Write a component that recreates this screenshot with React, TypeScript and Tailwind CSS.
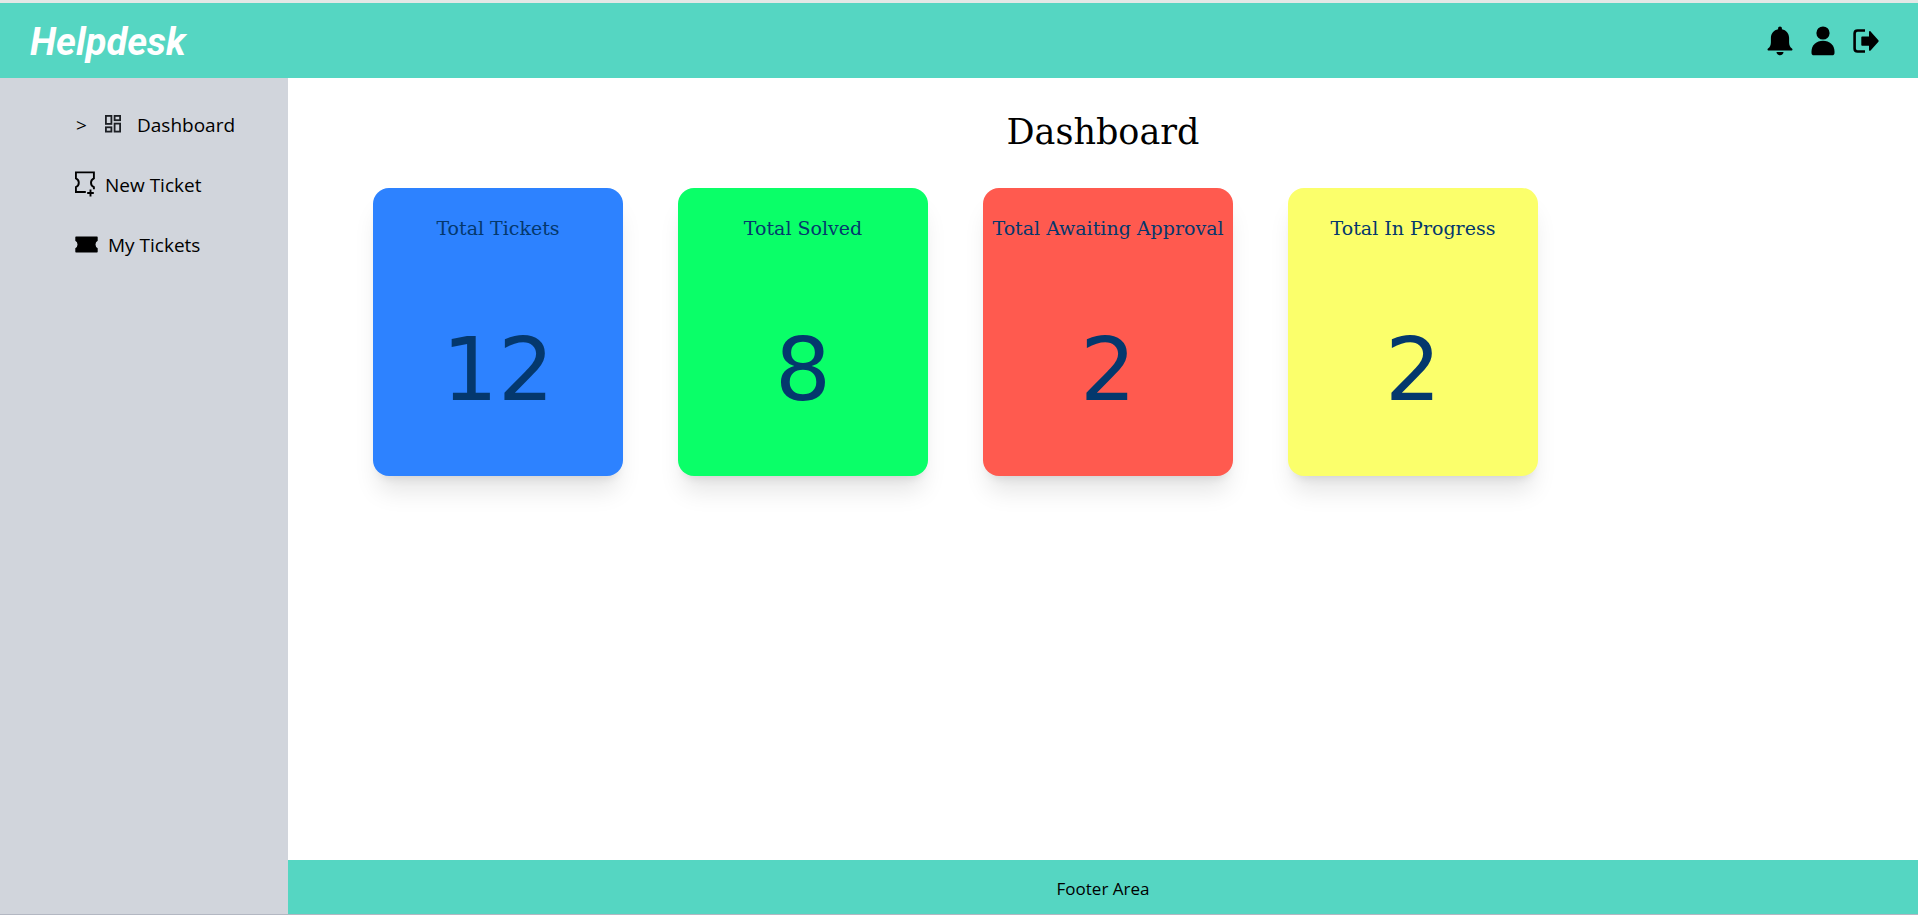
import type { ReactNode } from "react";

type Stat = { title: string; value: number; color: string };

const stats: Stat[] = [
  { title: "Total Tickets", value: 12, color: "bg-[#2d82ff]" },
  { title: "Total Solved", value: 8, color: "bg-[#0aff68]" },
  { title: "Total Awaiting Approval", value: 2, color: "bg-[#ff5a4f]" },
  { title: "Total In Progress", value: 2, color: "bg-[#fbff6b]" },
];

function BellIcon() {
  return (
    <svg viewBox="0 0 26 30" className="h-[30px] w-[26px]" fill="currentColor" aria-hidden="true">
      <path d="M13 0.5c1.1 0 1.9 0.8 1.9 1.8v0.9c4.3 0.8 7.2 4.2 7.2 8.6v4.4c0 2.7 1 4.9 2.9 6.4 0.9 0.8 0.5 2-0.7 2H1.7c-1.2 0-1.6-1.2-0.7-2 1.9-1.5 2.9-3.7 2.9-6.4v-4.4c0-4.4 2.9-7.8 7.2-8.6v-0.9c0-1 0.8-1.8 1.9-1.8z" />
      <path d="M9.5 26h7c0 1.9-1.5 3.3-3.5 3.3s-3.5-1.4-3.5-3.3z" />
    </svg>
  );
}

function PersonIcon() {
  return (
    <svg viewBox="0 0 24 30" className="h-[30px] w-6" fill="currentColor" aria-hidden="true">
      <circle cx="12" cy="7" r="6.6" />
      <path d="M0.5 25.5C0.5 19 5.500 14.800 12 14.800s11.500 4.200 11.500 10.700v1.500c0 1.400-1 2.300-2.400 2.300H2.900c-1.400 0-2.400-0.900-2.400-2.300z" />
    </svg>
  );
}

function LogOutIcon() {
  return (
    <svg viewBox="0 0 26 24" className="h-6 w-[26px]" fill="currentColor" aria-hidden="true">
      <path d="M12 1.500H4.600C2.900 1.500 1.600 2.800 1.600 4.500v15c0 1.700 1.300 3 3 3H12" fill="none" stroke="currentColor" strokeWidth="2.600" />
      <path d="M8.300 8.200c0-0.500 0.300-0.800 0.800-0.800h6.900V3.200c0-1.200 0.900-1.500 1.600-0.700l7.800 8.700c0.400 0.500 0.400 1.100 0 1.600l-7.800 8.700c-0.700 0.800-1.600 0.500-1.600-0.700v-4H9.100c-0.500 0-0.800-0.300-0.800-0.800z" />
    </svg>
  );
}

function DashboardIcon() {
  return (
    <svg viewBox="0 0 16 18" className="h-[18px] w-4" fill="none" stroke="#1c1f24" strokeWidth="1.800" aria-hidden="true">
      <rect x="0.900" y="0.900" width="5.500" height="8" />
      <rect x="9.600" y="0.900" width="5.500" height="4.300" />
      <rect x="0.900" y="12.300" width="5.500" height="4.300" />
      <rect x="9.600" y="8.600" width="5.500" height="8" />
    </svg>
  );
}

function NewTicketIcon() {
  return (
    <svg viewBox="0 0 20 26" className="h-[26px] w-5" fill="none" stroke="currentColor" strokeWidth="1.900" aria-hidden="true">
      <path d="M10.800 21H0.900v-4.800c1.800-0.800 2.900-2.300 2.900-4.400S2.700 8.200 0.900 7.400V1.400h18v6c-1.800 0.800-2.900 2.300-2.900 4.400s1.100 3.600 2.900 4.400v2" />
      <path d="M15.500 18.500v7M12.200 22h6.600" />
    </svg>
  );
}

function TicketIcon() {
  return (
    <svg viewBox="0 0 23 17" className="h-[17px] w-[23px]" fill="currentColor" aria-hidden="true">
      <path d="M1 0.500h21q0.700 0 0.700 0.700V4.800a4.200 4.200 0 0 0 0 7.400v3.600q0 0.700-0.700 0.700H1q-0.700 0-0.700-0.700v-3.600a4.200 4.200 0 0 0 0-7.400V1.200q0-0.700 0.700-0.700z" />
    </svg>
  );
}

function IconButton({ label, children }: { label: string; children: ReactNode }) {
  return (
    <button type="button" aria-label={label} className="flex h-10 items-center justify-center">
      {children}
    </button>
  );
}

function StatCard({ title, value, color }: Stat) {
  return (
    <article
      className={`flex h-72 w-[250px] flex-col items-center rounded-2xl pt-[26px] text-[#04386d] shadow-xl ${color}`}
    >
      <h2 className="font-['DejaVu_Serif',serif] text-[19px] leading-7 whitespace-nowrap">{title}</h2>
      <p className="mt-[74px] font-['DejaVu_Sans',sans-serif] text-[88px] leading-[108px]">{value}</p>
    </article>
  );
}

export default function App() {
  return (
    <div className="flex min-h-screen flex-col border-t-3 border-b border-t-[#e3e8e6] border-b-[#b3b7c2] bg-white font-['Open_Sans',sans-serif] text-black">
      <header className="flex h-[75px] items-center justify-between bg-[#55d6c2] pr-[39px] pl-[30px]">
        <a href="#home" className="pt-[3px] font-['Roboto',sans-serif] text-[38px] leading-12 font-bold text-white italic">
          Helpdesk
        </a>
        <div className="flex items-center gap-[18px]">
          <IconButton label="Notifications"><BellIcon /></IconButton>
          <IconButton label="Profile"><PersonIcon /></IconButton>
          <IconButton label="Log out"><LogOutIcon /></IconButton>
        </div>
      </header>

      <div className="flex flex-1">
        <aside className="w-72 shrink-0 bg-[#d1d5dc] pt-8 pl-[75px]">
          <nav className="flex flex-col gap-8 text-[19px] leading-7">
            <a href="#dashboard" aria-current="page" className="flex h-7 items-center">
              <span className="w-[30px] pt-px pl-px">&gt;</span>
              <DashboardIcon />
              <span className="pt-px pl-4">Dashboard</span>
            </a>
            <a href="#new-ticket" className="flex h-7 items-center gap-[10px]">
              <NewTicketIcon />
              <span className="pt-px">New Ticket</span>
            </a>
            <a href="#my-tickets" className="flex h-7 items-center gap-[10px]">
              <TicketIcon />
              <span className="pt-px">My Tickets</span>
            </a>
          </nav>
        </aside>

        <div className="flex min-w-0 flex-1 flex-col">
          <main className="flex-1 pt-[34px]">
            <h1 className="text-center font-['DejaVu_Serif',serif] text-[35px] leading-10">Dashboard</h1>
            <section aria-label="Ticket totals" className="mt-9 flex flex-wrap gap-[55px] pl-[85px]">
              {stats.map((stat) => (
                <StatCard key={stat.title} {...stat} />
              ))}
            </section>
          </main>
          <footer className="flex h-[54px] items-center justify-center bg-[#55d6c2] pt-1 text-[17px]">Footer Area</footer>
        </div>
      </div>
    </div>
  );
}
